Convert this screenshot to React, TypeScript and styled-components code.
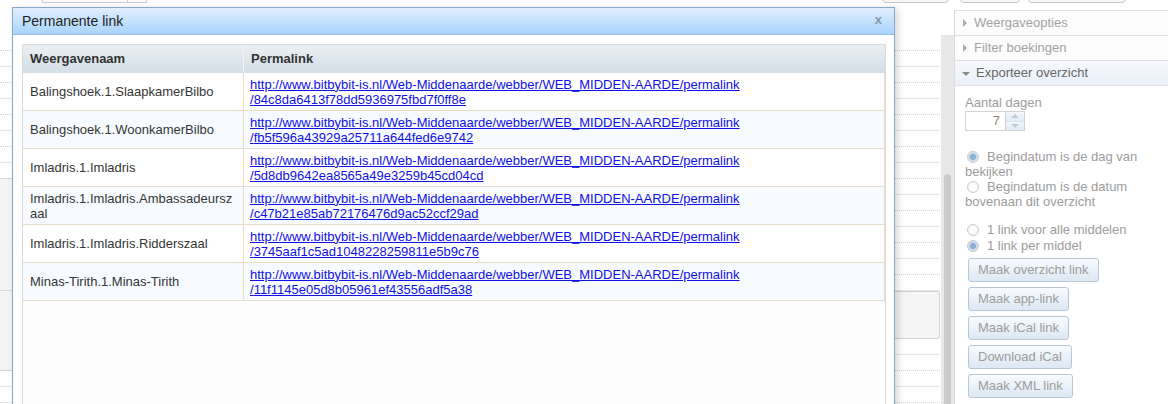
import React from "react";
import styled, { createGlobalStyle, css } from "styled-components";

const GlobalStyle = createGlobalStyle`
  html, body { margin: 0; padding: 0; }
  body {
    font-family: "Liberation Sans", Arial, sans-serif;
    background: #fff;
    width: 1168px;
    height: 404px;
    overflow: hidden;
  }
`;

const Page = styled.div`
  position: relative;
  width: 1168px;
  height: 404px;
  overflow: hidden;
  display: flex;
  flex-direction: column;
`;

/* ---------- toolbar (scrolled mostly out of view) ---------- */

const TopBar = styled.div`
  flex: none;
  height: 3px;
  overflow: hidden;
  display: flex;
  align-items: flex-end;
  justify-content: space-between;
  padding: 0 42px;
`;

const ToolGroup = styled.div`
  display: flex;
  align-items: flex-end;
`;

const ComboPart = styled.div<{ $w: number }>`
  width: ${(p) => p.$w}px;
  height: 20px;
  box-sizing: border-box;
  border: 1px solid #cfcfcf;
  & + & { border-left: none; }
`;

const ToolButton = styled.div<{ $w: number; $ml?: number }>`
  width: ${(p) => p.$w}px;
  height: 20px;
  margin-left: ${(p) => p.$ml ?? 0}px;
  box-sizing: border-box;
  border: 1px solid #c6c6c6;
  border-radius: 4px;
  background: #f7f7f7;
`;

/* ---------- workspace: schedule grid, scrollbar, sidebar ---------- */

const Workspace = styled.div`
  flex: 1;
  min-height: 0;
  display: flex;
`;

const Main = styled.div`
  width: 941px;
  flex: none;
  display: flex;
  flex-direction: column;
`;

const MainHeader = styled.div`
  height: 32px;
  flex: none;
`;

const Grid = styled.div`
  display: grid;
  grid-template-columns: 180px 1fr;
`;

const Column = styled.div<{ $mr?: number }>`
  display: flex;
  flex-direction: column;
  margin-right: ${(p) => p.$mr ?? 0}px;
`;

const Slot = styled.div<{ $line: "dotted" | "solid" }>`
  height: 15px;
  flex: none;
  border-bottom: 1px ${(p) => (p.$line === "dotted" ? "dotted #d2d2d2" : "solid #e7e7e7")};
`;

const Booking = styled.div<{ $h: number }>`
  height: ${(p) => p.$h}px;
  flex: none;
  border: 1px solid #d0d0d0;
  border-left: none;
  border-radius: 0 3px 3px 0;
  background: #f5f5f5;
`;

const GroupCell = styled.div<{ $h: number; $grey?: boolean }>`
  height: ${(p) => p.$h}px;
  flex: none;
  border-bottom: 1px solid #d6d6d6;
  background: ${(p) => (p.$grey ? "#f4f4f4" : "#fff")};
`;

const ScrollTrack = styled.div`
  width: 13px;
  flex: none;
  margin-top: 32px;
  padding-top: 139px;
  background: #e8e8e8;
  display: flex;
  flex-direction: column;
`;

const ScrollThumb = styled.div`
  flex: 1;
  width: 7px;
  margin-left: 3px;
  background: #cbcbcb;
  border-radius: 4px 4px 0 0;
`;

const Sidebar = styled.div`
  flex: 1;
  margin-top: 7px;
  border-left: 1px solid #dcdcdc;
  display: flex;
  flex-direction: column;
  font-size: 13px;
  color: #9c9c9c;
`;

const PanelHeader = styled.div<{ $open?: boolean }>`
  height: 24px;
  border-top: 1px solid #e0e0e0;
  display: flex;
  align-items: center;
  gap: 6px;
  padding-left: 7px;
  line-height: 24px;
  color: ${(p) => (p.$open ? "#666" : "#a3a3a3")};
  background: ${(p) => (p.$open ? "linear-gradient(#f6f9fd, #e9f0f8)" : "#fcfcfc")};
  ${(p) =>
    p.$open &&
    css`
      border-bottom: 1px solid #e0e0e0;
    `}
`;

const Caret = styled.span<{ $open?: boolean }>`
  display: inline-block;
  width: 0;
  height: 0;
  ${(p) =>
    p.$open
      ? css`
          border-left: 4px solid transparent;
          border-right: 4px solid transparent;
          border-top: 4px solid #888;
          margin-top: 1px;
        `
      : css`
          border-top: 4px solid transparent;
          border-bottom: 4px solid transparent;
          border-left: 4px solid #aaa;
          margin-left: 1px;
          margin-right: 1px;
        `}
`;

const PanelBody = styled.div`
  padding: 9px 10px 0 10px;
  display: flex;
  flex-direction: column;
  align-items: flex-start;
`;

const FieldLabel = styled.div`
  line-height: 15px;
`;

const NumberField = styled.div`
  display: flex;
  margin-top: 1px;
  height: 20px;
`;

const NumberBox = styled.div`
  width: 41px;
  box-sizing: border-box;
  border: 1px solid #d2d2d2;
  text-align: right;
  padding-right: 5px;
  line-height: 18px;
  color: #888;
  background: #fff;
`;

const Spinner = styled.div`
  width: 19px;
  display: flex;
  flex-direction: column;
  border: 1px solid #d2d2d2;
  border-left: none;
  box-sizing: border-box;
`;

const SpinHalf = styled.div<{ $up?: boolean }>`
  flex: 1;
  display: flex;
  align-items: center;
  justify-content: center;
  background: linear-gradient(#f3f7fb, #e2ebf4);
  ${(p) =>
    p.$up &&
    css`
      border-bottom: 1px solid #dde3ea;
    `}
  &::after {
    content: "";
    width: 0;
    height: 0;
    border-left: 4px solid transparent;
    border-right: 4px solid transparent;
    ${(p) => (p.$up ? "border-bottom: 4px solid #bccbdb;" : "border-top: 4px solid #bccbdb;")}
  }
`;

const RadioGroup = styled.div<{ $mt: number; $lh: number }>`
  margin-top: ${(p) => p.$mt}px;
  line-height: ${(p) => p.$lh}px;
`;

const RadioOption = styled.div``;

const RadioDot = styled.span<{ $checked?: boolean }>`
  display: inline-block;
  width: 12px;
  height: 12px;
  box-sizing: border-box;
  margin: 0 8px 0 2px;
  vertical-align: -2px;
  border-radius: 50%;
  border: 1px solid #cbcbcb;
  background: ${(p) =>
    p.$checked
      ? "radial-gradient(circle, #8fb2d4 0 2.6px, #c9dbec 3.6px, #eef3f8 100%)"
      : "radial-gradient(circle, #ffffff 0 3px, #ececec 100%)"};
`;

const ActionButton = styled.div`
  height: 24px;
  box-sizing: border-box;
  margin: 0 0 5px 3px;
  padding: 0 9px;
  border: 1px solid #b9c6d4;
  border-radius: 3px;
  background: linear-gradient(#f8fbfe, #dce8f4);
  line-height: 22px;
  color: #9d9d9d;
  white-space: nowrap;
`;

/* ---------- permalink dialog ---------- */

const Dialog = styled.div`
  position: absolute;
  left: 12px;
  top: 7px;
  width: 883px;
  height: 420px;
  box-sizing: border-box;
  border: 1px solid #88a7c7;
  background: #fff;
  box-shadow: 3px 2px 8px rgba(0, 0, 0, 0.16);
  display: flex;
  flex-direction: column;
`;

const TitleBar = styled.div`
  height: 26px;
  flex: none;
  border-bottom: 1px solid #95bee6;
  background: linear-gradient(#e1effe, #a9d4fd);
  display: flex;
  align-items: center;
  justify-content: space-between;
  padding: 0 12px 0 9px;
`;

const Title = styled.span`
  font-size: 14px;
  color: #222;
`;

const CloseMark = styled.span`
  font-size: 13px;
  font-weight: bold;
  color: #8b98a6;
  line-height: 1;
  margin-top: -3px;
`;

const DialogBody = styled.div`
  flex: 1;
  display: flex;
  flex-direction: column;
  padding: 9px 8px 0 9px;
`;

const TableFrame = styled.div`
  flex: 1;
  border: 1px solid #dadada;
  border-bottom: none;
  background: #fdfdfd;
`;

const HeadRow = styled.div`
  display: grid;
  grid-template-columns: 221px 1fr;
  height: 28px;
  background: linear-gradient(#ebf0f4, #d2dde6);
`;

const HeadCell = styled.div<{ $divider?: boolean }>`
  padding: 0 7px;
  line-height: 28px;
  font-size: 13px;
  font-weight: bold;
  color: #333;
  ${(p) =>
    p.$divider &&
    css`
      border-right: 1px solid #f1f4f7;
    `}
`;

const DataRow = styled.div<{ $alt: boolean }>`
  display: grid;
  grid-template-columns: 221px 1fr;
  height: 37px;
  border-bottom: 1px solid #e6ddcb;
  border-right: 1px solid #e6ddcb;
  background: ${(p) => (p.$alt ? "#f7fbff" : "#fff")};
`;

const NameCell = styled.div`
  display: flex;
  align-items: center;
  padding: 0 7px;
  border-right: 1px solid #e6ddcb;
  font-size: 13px;
  line-height: 15px;
  color: #353535;
  word-break: break-all;
`;

const LinkCell = styled.div`
  display: flex;
  align-items: center;
  padding: 0 6px;
  font-size: 13px;
  line-height: 15px;
`;

const Permalink = styled.a`
  color: #1010e8;
  text-decoration: underline;
`;

const BASE_URL = "http://www.bitbybit-is.nl/Web-Middenaarde/webber/WEB_MIDDEN-AARDE/permalink";

const links: [string, string][] = [
  ["Balingshoek.1.SlaapkamerBilbo", "84c8da6413f78dd5936975fbd7f0ff8e"],
  ["Balingshoek.1.WoonkamerBilbo", "fb5f596a43929a25711a644fed6e9742"],
  ["Imladris.1.Imladris", "5d8db9642ea8565a49e3259b45cd04cd"],
  ["Imladris.1.Imladris.Ambassadeurszaal", "c47b21e85ab72176476d9ac52ccf29ad"],
  ["Imladris.1.Imladris.Ridderszaal", "3745aaf1c5ad1048228259811e5b9c76"],
  ["Minas-Tirith.1.Minas-Tirith", "11f1145e05d8b05961ef43556adf5a38"],
];

const lineAt = (i: number): "dotted" | "solid" => (i % 2 === 0 ? "dotted" : "solid");

export default function App() {
  const upperSlots = Array.from({ length: 16 }, (_, i) => lineAt(i));
  const lowerSlots: ("dotted" | "solid")[] = ["solid", "dotted", "solid", "dotted"];
  const labelSlots = Array.from({ length: 8 }, (_, i) => lineAt(i));

  return (
    <Page>
      <GlobalStyle />
      <TopBar>
        <ToolGroup>
          <ComboPart $w={86} />
          <ComboPart $w={19} />
        </ToolGroup>
        <ToolGroup>
          <ToolButton $w={67} />
          <ToolButton $w={60} $ml={11} />
          <ToolButton $w={98} $ml={8} />
        </ToolGroup>
      </TopBar>

      <Workspace>
        <Main>
          <MainHeader />
          <Grid>
            <Column>
              {labelSlots.map((l, i) => (
                <Slot key={i} $line={l} />
              ))}
              <GroupCell $h={15} />
              <GroupCell $h={111} $grey />
              <GroupCell $h={79} $grey />
              <Slot $line="solid" />
              <Slot $line="dotted" />
            </Column>
            <Column $mr={1}>
              {upperSlots.map((l, i) => (
                <Slot key={i} $line={l} />
              ))}
              <Booking $h={46} />
              {lowerSlots.map((l, i) => (
                <Slot key={`b${i}`} $line={l} />
              ))}
            </Column>
          </Grid>
        </Main>

        <ScrollTrack>
          <ScrollThumb />
        </ScrollTrack>

        <Sidebar>
          <PanelHeader>
            <Caret />
            Weergaveopties
          </PanelHeader>
          <PanelHeader>
            <Caret />
            Filter boekingen
          </PanelHeader>
          <PanelHeader $open>
            <Caret $open />
            Exporteer overzicht
          </PanelHeader>
          <PanelBody>
            <FieldLabel>Aantal dagen</FieldLabel>
            <NumberField>
              <NumberBox>7</NumberBox>
              <Spinner>
                <SpinHalf $up />
                <SpinHalf />
              </Spinner>
            </NumberField>

            <RadioGroup $mt={18} $lh={15}>
              <RadioOption>
                <RadioDot $checked />
                Begindatum is de dag van bekijken
              </RadioOption>
              <RadioOption>
                <RadioDot />
                Begindatum is de datum bovenaan dit overzicht
              </RadioOption>
            </RadioGroup>

            <RadioGroup $mt={13} $lh={16}>
              <RadioOption>
                <RadioDot />1 link voor alle middelen
              </RadioOption>
              <RadioOption>
                <RadioDot $checked />1 link per middel
              </RadioOption>
            </RadioGroup>

            <div style={{ height: 4 }} />
            <ActionButton>Maak overzicht link</ActionButton>
            <ActionButton>Maak app-link</ActionButton>
            <ActionButton>Maak iCal link</ActionButton>
            <ActionButton>Download iCal</ActionButton>
            <ActionButton>Maak XML link</ActionButton>
          </PanelBody>
        </Sidebar>
      </Workspace>

      <Dialog>
        <TitleBar>
          <Title>Permanente link</Title>
          <CloseMark>x</CloseMark>
        </TitleBar>
        <DialogBody>
          <TableFrame>
            <HeadRow>
              <HeadCell $divider>Weergavenaam</HeadCell>
              <HeadCell>Permalink</HeadCell>
            </HeadRow>
            {links.map(([name, hash], i) => (
              <DataRow key={hash} $alt={i % 2 === 1}>
                <NameCell>{name}</NameCell>
                <LinkCell>
                  <Permalink href={`${BASE_URL}/${hash}`}>
                    {BASE_URL}
                    <br />/{hash}
                  </Permalink>
                </LinkCell>
              </DataRow>
            ))}
          </TableFrame>
        </DialogBody>
      </Dialog>
    </Page>
  );
}
